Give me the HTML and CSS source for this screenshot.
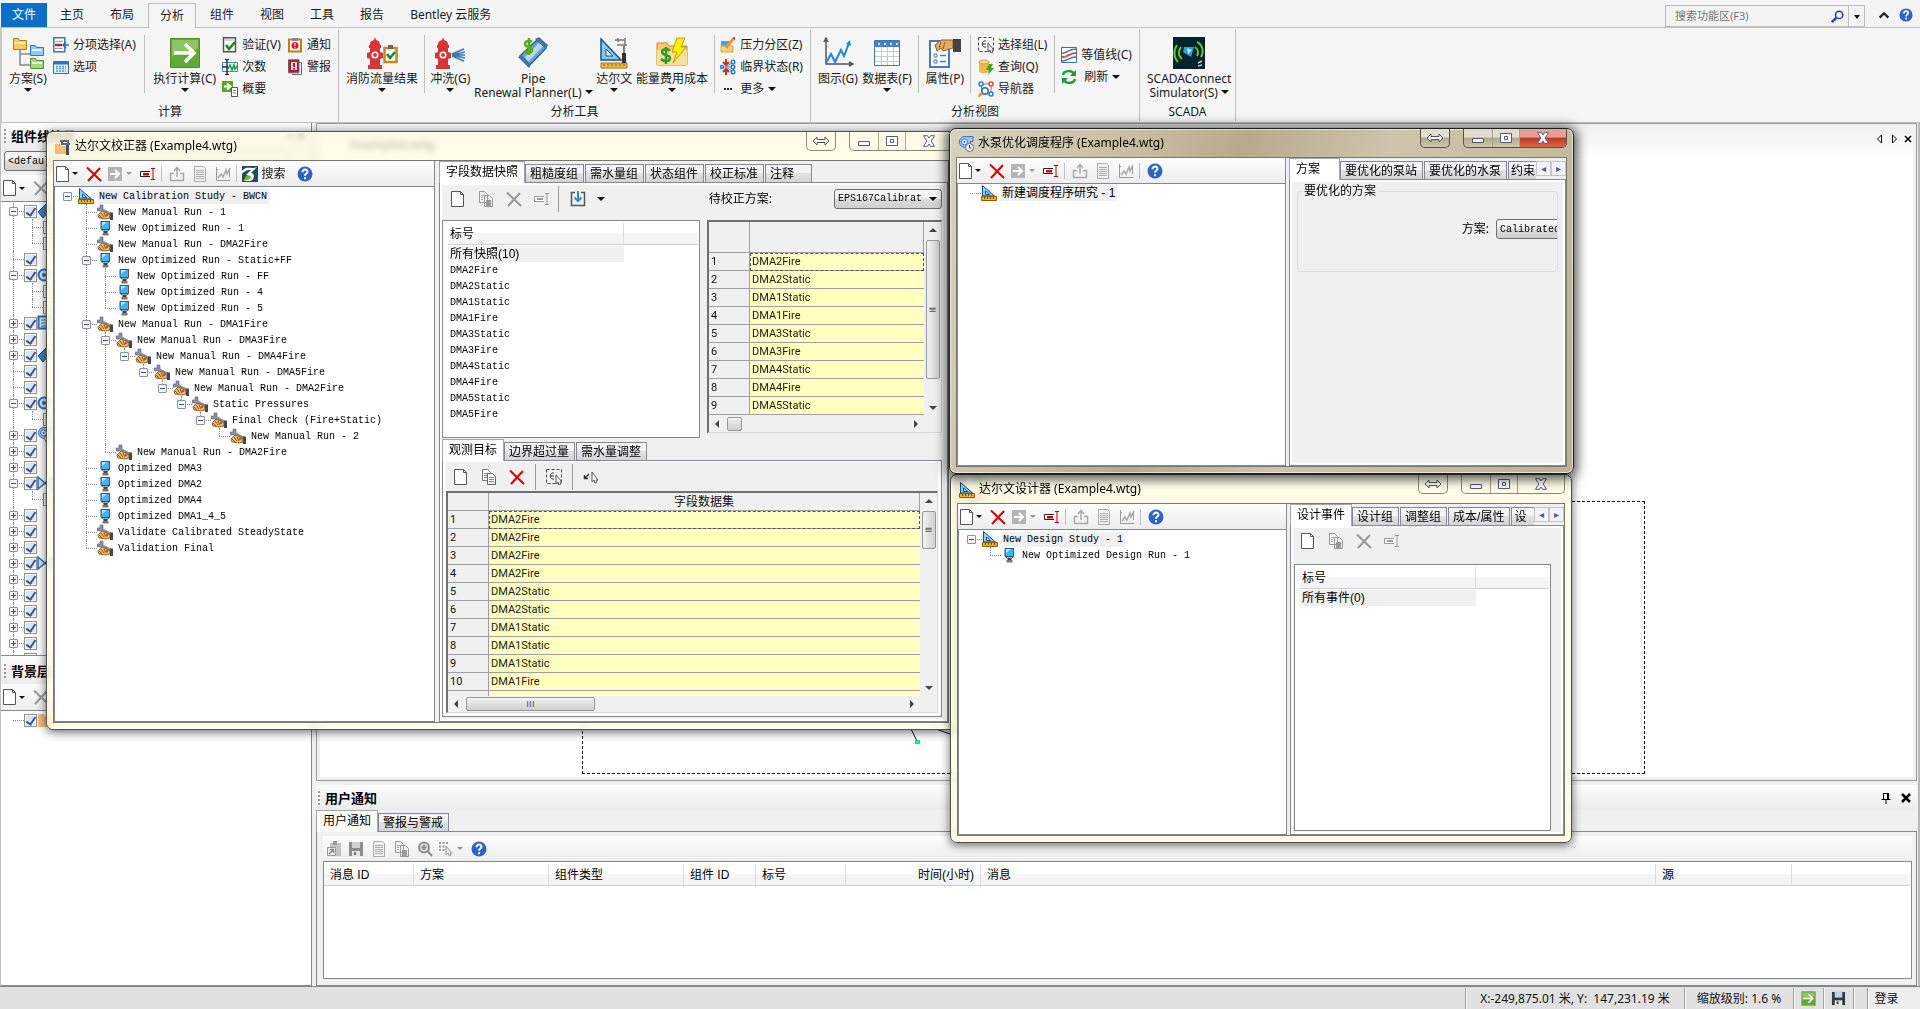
FILE: index.html
```
<!DOCTYPE html>
<html lang="zh-CN">
	<head>
		<meta charset="UTF-8">
		<title>WaterGEMS</title>
		<link rel="stylesheet" href="styles.css">
	</head>
	<body>
		<!-- 图标 -->
		<svg class="sprite" aria-hidden="true">
			<symbol id="new" viewBox="0 0 16 16"><path d="M1.5.5h9l3 3v12h-12z" fill="#fff" stroke="#555"/><path d="M10.500.5v3h3" fill="none" stroke="#555"/></symbol>
			<symbol id="del" viewBox="0 0 16 16"><path d="M1 1.500L15 15M14 2L2 15" fill="none" stroke="#d40000" stroke-width="2"/></symbol>
			<symbol id="del-g" viewBox="0 0 16 16"><path d="M1 1.500L15 15M14 2L2 15" fill="none" stroke="#999" stroke-width="2"/></symbol>
			<symbol id="go-g" viewBox="0 0 16 16"><path d="M1 1h14v14H1z" fill="#b4b4b4"/><path d="M3 8h9M8 4l4 4-4 4" fill="none" stroke="#fff" stroke-width="2"/></symbol>
			<symbol id="go" viewBox="0 0 32 32"><path d="M1.500 1.500h29v29h-29z" fill="#62ab33" stroke="#4d8c26"/><path d="M3 3h26v8C20 18 9 12 3 20z" fill="#8cc466"/><path d="M5 16h19M16 7l9 9-9 9" fill="none" stroke="#fff" stroke-width="3.500"/></symbol>
			<symbol id="ren" viewBox="0 0 16 16"><path d="M10 5.500H.5v5H10" fill="#fff" stroke="#222"/><path d="M3 7h6v2.500H3z" fill="#d40000"/><path d="M11 2.500h4M11 13.500h4M13 3v10" stroke="#b00" fill="none"/></symbol>
			<symbol id="ren-g" viewBox="0 0 16 16"><path d="M10 5.500H.5v5H10" fill="#fff" stroke="#999"/><path d="M3 7h6v2H3z" fill="#999"/><path d="M11 2.500h4M11 13.500h4M13 3v10" stroke="#999" fill="none"/></symbol>
			<symbol id="exp" viewBox="0 0 16 16"><path d="M5 7.500H1.500v7h13v-7H11M8 11V2M5 5l3-3.500L11 5" fill="none" stroke="#aaa" stroke-width="1.500"/></symbol>
			<symbol id="rep" viewBox="0 0 16 16"><path d="M2.500.5h9l2 2v13h-11z" fill="#f2f2f2" stroke="#aaa"/><path d="M4 4.500h8M4 6.500h8M4 8.500h8M4 10.500h8M4 12.500h8" stroke="#aaa"/></symbol>
			<symbol id="cht" viewBox="0 0 16 16"><path d="M1.500 1v13.500H15M1 3.500h2M14.500 2v9" fill="none" stroke="#999"/><path d="M3 12l3-4 2 3 3-7 1 4 3-6" fill="none" stroke="#a8a8a8" stroke-width="1.500"/></symbol>
			<symbol id="help" viewBox="0 0 16 16"><circle cx="8" cy="8" r="7.500" fill="#2a64c8"/><path d="M5.500 6.200C5.500 2.500 10.800 3 10.500 6c-.2 1.700-2.500 1.500-2.500 3.700" fill="none" stroke="#fff" stroke-width="2"/><path d="M7 11.200h2v2H7z" fill="#fff"/></symbol>
			<symbol id="logo" viewBox="0 0 16 16"><path d="M0 0h16v16H0z" fill="#1c4f57"/><path d="M0 5C5-1 9 4 15 1L9 7c4 0 4 7-1 8H1C8 13 8 9 4 9l5-5C6 4 3 4 0 8z" fill="#fff"/><path d="M3 12c1-3 6-3 6-1s-4 4-7 3z" fill="#6abf2b"/></symbol>
			<symbol id="copy" viewBox="0 0 16 16"><path d="M1.500.5h5l3 3v8h-8z" fill="#fff" stroke="#777"/><path d="M3 4.500h4M3 6.500h4M3 8.500h3" stroke="#5a8fd0"/><path d="M6.500 4.500h5l3 3v8h-8z" fill="#fff" stroke="#666"/><path d="M8 8.500h5M8 10.500h5M8 12.500h5" stroke="#5a8fd0"/></symbol>
			<symbol id="copy-g" viewBox="0 0 16 16"><path d="M1.500.5h5l3 3v8h-8zM6.500 4.500h5l3 3v8h-8z" fill="#f4f4f4" stroke="#999"/><path d="M3 4.500h3M3 6.500h2M3 8.500h2" stroke="#aaa"/><path d="M8 9h5v6H8z" fill="#999"/></symbol>
			<symbol id="imp" viewBox="0 0 16 16"><path d="M5 1.500H1.500v13h13v-13H11" fill="none" stroke="#555" stroke-width="1.500"/><path d="M8 0v10M4.500 6.500L8 10l3.500-3.500" fill="none" stroke="#2a8fd6" stroke-width="2"/></symbol>
			<symbol id="sel" viewBox="0 0 16 16"><path d="M.5.5h15v14H.5z" fill="none" stroke="#444" stroke-dasharray="3 2"/><path d="M8 4C3 3 3 11 8 10M4 7h4" fill="none" stroke="#333"/><path d="M10 6v9l2-2 1 3 2-1-1-2h2z" fill="#fff" stroke="#555"/></symbol>
			<symbol id="pick" viewBox="0 0 16 16"><path d="M6 5L2 9M1.500 6v3.500H5" fill="none" stroke="#333" stroke-width="1.500"/><path d="M9 3v10l2-2 1 3 2-1-1-2h2z" fill="#fff" stroke="#555"/></symbol>
			<symbol id="rule" viewBox="0 0 16 16"><path d="M1.500.5L13.500 11h-12z" fill="#8cd0f2" stroke="#0e4e80"/><path d="M4.500 6l4 3.500h-4z" fill="#fff" stroke="#0e4e80"/><path d="M.5 11.500h15v4H.5z" fill="#f0b429" stroke="#8a5a00"/><path d="M3.500 12v2M6.500 12v2M9.500 12v2M12.500 12v2" stroke="#6b4400"/></symbol>
			<symbol id="pc" viewBox="0 0 16 16"><path d="M4 1.500h8.500v8H4z" fill="#3db4f5" stroke="#27557f"/><path d="M5 2h5L5 6z" fill="#b8e6ff"/><path d="M12.500 1v9l-2 1h-4l-2-1" fill="none" stroke="#555"/><path d="M6.500 11h4v2h-4z" fill="#444"/><path d="M5.500 13h6v2.500h-6z" fill="#777"/></symbol>
			<symbol id="hand" viewBox="0 0 16 16"><path d="M0 4h3V1h3v4l8 4-2 3-8-5H0z" fill="#8b8fae" stroke="#5d6280" stroke-width=".6"/><path d="M1 11l4-4 5 2 3 2v3l-4 1-7-1z" fill="#eebb62" stroke="#7a4a12" stroke-width=".8"/><path d="M4 9l3 4M7 9l2 4M2 11l3 3" stroke="#8a5418"/><circle cx="10" cy="11" r="1.200" fill="#e0481e"/><path d="M13 8.500h3V16h-3z" fill="#484848"/></symbol>
			<symbol id="cal" viewBox="0 0 16 16"><path d="M0 5h5l1 2h7v8H0z" fill="#f0bd76"/><path d="M5 2h9M7 5h8M7 1v5M13 1v5" stroke="#5e6a70" stroke-width="2"/><path d="M11 6h3v10h-3z" fill="#44525a"/></symbol>
			<symbol id="pump" viewBox="0 0 16 16"><path d="M15 .5v5h-3C14 10 9 13 5 11 0 9 0 2 6 .5z" fill="#9cc4ee" stroke="#3f78b8"/><circle cx="6.500" cy="6" r="3" fill="#e8f3ff" stroke="#3f78b8"/><circle cx="6.500" cy="6" r="1" fill="#235a9a"/><circle cx="11.500" cy="11.500" r="4" fill="#fff" stroke="#4a6f99"/><path d="M11.500 9v3h2" fill="none" stroke="#333"/></symbol>
			<symbol id="pipe" viewBox="0 0 16 16"><path d="M1 9L9 1l5 5-8 9z" fill="#3f7fc0" stroke="#1c4f8c"/></symbol>
			<symbol id="node" viewBox="0 0 16 16"><circle cx="7" cy="8" r="5.500" fill="#cfe4fa" stroke="#2a6cb4" stroke-width="2"/><circle cx="7" cy="8" r="2" fill="#2a6cb4"/></symbol>
			<symbol id="tank" viewBox="0 0 16 16"><path d="M1.500 1.500h12v12h-12z" fill="#d6e9fb" stroke="#2a6cb4" stroke-width="2"/><path d="M4 5h7M4 8h7M4 11h7" stroke="#2a6cb4"/></symbol>
			<symbol id="valve" viewBox="0 0 16 16"><path d="M1 2l7 6-7 6zM15 2L8 8l7 6z" fill="#cfe4fa" stroke="#2a6cb4" stroke-width="1.500"/></symbol>
			<symbol id="layer" viewBox="0 0 16 16"><path d="M1 2h6l1 2h8v11H1z" fill="#f9b877"/></symbol>
			<symbol id="mag" viewBox="0 0 16 16"><circle cx="10" cy="6" r="4.500" fill="none" stroke="#2c3ea8" stroke-width="2"/><path d="M7 9l-6 6" stroke="#2c3ea8" stroke-width="3"/></symbol>
			<symbol id="wide" viewBox="0 0 18 10"><path d="M1 5l4-4v2.500h8V1l4 4-4 4V6.500H5V9z" fill="#fff" stroke="#555"/></symbol>
			<symbol id="wmin" viewBox="0 0 14 12"><path d="M1.500 6.500h11v4h-11z" fill="#fff" stroke="#555b70"/></symbol>
			<symbol id="wmax" viewBox="0 0 14 12"><path d="M1.500 1.500h11v9h-11z" fill="#fff" stroke="#555b70"/><path d="M5.500 4.500h3v3h-3z" fill="#fff" stroke="#555b70"/></symbol>
			<symbol id="wx" viewBox="0 0 14 12"><path d="M1.500.7h4L7 3 8.500.7h4L9.200 6l3.300 5.300h-4L7 9l-1.500 2.300h-4L4.800 6z" fill="#fff" stroke="#555b70"/></symbol>
			<symbol id="disk" viewBox="0 0 16 16"><path d="M1 1h14v14H1z" fill="#333a48"/><path d="M4 1h8v6H4z" fill="#c8d2de"/><path d="M4 10h8v5H4z" fill="#eee"/><path d="M6 11h2v3H6z" fill="#333"/></symbol>
			<symbol id="disk-g" viewBox="0 0 16 16"><path d="M1 1h14v14H1z" fill="#8c8c8c"/><path d="M4 1h8v6H4z" fill="#d0d0d0"/><path d="M4 10h8v5H4z" fill="#e4e4e4"/><path d="M6 11h2v3H6z" fill="#777"/></symbol>
			<symbol id="openlog" viewBox="0 0 16 16"><path d="M4 2h11v13H4z" fill="#c4c4c4"/><path d="M7 0h4v4H7z" fill="#999"/><path d="M1.500 6.500h8v8h-8z" fill="#eee" stroke="#999"/><path d="M3 13l4-4M4 8.500h3.500V12" fill="none" stroke="#888" stroke-width="1.500"/></symbol>
			<symbol id="zoom" viewBox="0 0 16 16"><circle cx="7" cy="6.500" r="5" fill="#ddd" stroke="#8c8c8c" stroke-width="2"/><path d="M4.500 6.500h5M7 4v5M11 10.500l4 4.500" stroke="#8c8c8c" stroke-width="2"/></symbol>
			<symbol id="dots" viewBox="0 0 16 16"><path d="M1 1h2v2H1zM4.500 1h2v2h-2zM8 1h2v2H8zM1 4.500h2v2H1zM4.500 4.500h2v2h-2zM1 8h2v2H1zM4.500 8h2v2h-2z" fill="#999"/><path d="M8 5v9l2-2 1.500 3 1.500-1-1-2h2z" fill="#e8e8e8" stroke="#999"/></symbol>
			<!-- 功能区图标 -->
			<symbol id="r-scn" viewBox="0 0 32 32"><path d="M8 12v16h10M8 17h10" fill="none" stroke="#888" stroke-width="1.500"/><path d="M1.500 1.500h5l1 2h7v9h-13z" fill="#fbc65a" stroke="#b87a14"/><path d="M3 6h10" stroke="#fff0c8" stroke-width="2"/><path d="M18.500 8.500h5l1 2h7v8h-13z" fill="#8ccbf5" stroke="#2b7db8"/><path d="M20 13h10" stroke="#dff2ff" stroke-width="2"/><path d="M18.500 21.500h5l1 2h7v8h-13z" fill="#a8d67c" stroke="#4f9130"/><path d="M20 26h10" stroke="#e4f5d2" stroke-width="2"/></symbol>
			<symbol id="r-alt" viewBox="0 0 16 16"><path d="M.8.8h11v14H.8z" fill="#fff" stroke="#3c77b5" stroke-width="1.500"/><path d="M2 4.500h8M2 11.500h8" stroke="#9ab"/><path d="M2 8h7" stroke="#c81e1e" stroke-width="2.500"/><path d="M16 8h-5M13 5l-3 3 3 3" fill="none" stroke="#2a6cb4" stroke-width="1.500"/></symbol>
			<symbol id="r-opt" viewBox="0 0 16 16"><path d="M.5 2.500h15v12H.5z" fill="#e2f0fd" stroke="#2c72c2"/><path d="M1 3h14v2.500H1z" fill="#2c72c2"/><path d="M3 7.500h10M3 9.500h10M3 12h10" stroke="#5a9be0" stroke-dasharray="2 1" stroke-width="1.500"/></symbol>
			<symbol id="r-val" viewBox="0 0 16 16"><path d="M1.500.8h12v14h-12z" fill="#fff" stroke="#555" stroke-width="1.500"/><path d="M3 3h9" stroke="#aaa"/><path d="M4 8l3 4 6-7" fill="none" stroke="#12851c" stroke-width="2.500"/></symbol>
			<symbol id="r-time" viewBox="0 0 16 16"><path d="M.5 3.500h15v9H.5z" fill="#eaf4fc" stroke="#4d86b5"/><path d="M0 8h6M5 1v14M3 .5h4M3 15.500h4" stroke="#333" stroke-width="1.500"/><path d="M6 10l2-4 2 5 2-5 1 4 3-4" fill="none" stroke="#18a038" stroke-width="1.500"/></symbol>
			<symbol id="r-sum" viewBox="0 0 16 16"><path d="M0 0h11v11H0z" fill="#57a52c"/><path d="M2 5.500h6M5 2.500l3.500 3-3.500 3" fill="none" stroke="#fff" stroke-width="2"/><path d="M9.500 6.500h6v9h-6z" fill="#fff" stroke="#555"/><path d="M11 9.500h3M11 12h3" stroke="#777"/></symbol>
			<symbol id="r-note" viewBox="0 0 16 16"><path d="M2 2.500h12v12H2z" fill="#fff" stroke="#bb8112" stroke-width="2"/><path d="M5 1h6v3H5z" fill="#888"/><circle cx="8" cy="8.500" r="3.500" fill="#d01e2e"/><path d="M8 6v3M8 10v1.500" stroke="#fff"/></symbol>
			<symbol id="r-alarm" viewBox="0 0 16 16"><path d="M5 3.500h9.500v12H5" fill="#fff" stroke="#666"/><path d="M1.500.8H12v13H1.500z" fill="#c1152a" stroke="#666"/><path d="M4 3h6v8H4z" fill="#e8d8d8"/><path d="M6 4h2v4H6zM6 9h2v1.500H6z" fill="#c1152a"/></symbol>
			<symbol id="r-fire" viewBox="0 0 32 32"><path d="M9 0l1 3c4 1 4 3 4 5h1v3h-1v4l3 1v5l-3 1v6h2v4H2v-4h2v-6l-3-1v-5l3-1v-4H3V8h1c0-2 0-4 4-5z" fill="#d83636"/><circle cx="9" cy="18" r="3.500" fill="#fff"/><circle cx="9" cy="18" r="2" fill="#d83636"/><path d="M18.500 11h12v14h-12z" fill="#fff" stroke="#c08c1c" stroke-width="2.500"/><path d="M22 8h5v4h-5z" fill="#666"/><path d="M21 17l3 4 5-6" stroke="#128a24" stroke-width="2.500" fill="none"/></symbol>
			<symbol id="r-flush" viewBox="0 0 32 32"><path d="M9 0l1 3c4 1 4 3 4 5h1v3h-1v4l3 1v5l-3 1v6h2v4H2v-4h2v-6l-3-1v-5l3-1v-4H3V8h1c0-2 0-4 4-5z" fill="#d83636"/><circle cx="9" cy="18" r="3.500" fill="#fff"/><circle cx="9" cy="18" r="2" fill="#d83636"/><path d="M18 17l12-5M18 18h13M18 19l12 5M18 18l13-3M18 18l13 3" stroke="#3578b4" stroke-width="1.500"/></symbol>
			<symbol id="r-ren" viewBox="0 0 32 32"><path d="M3 19L20 3l9 8-17 18z" fill="#6ba2d6" stroke="#2a5c92" stroke-width="1.500"/><path d="M8 20L22 6l4 3-15 16z" fill="#b6d6f2"/><path d="M18 2l4-2 9 8-2 4zM1 20l3-2 10 9-2 4z" fill="#47739f"/><path d="M15 5c-2-2-7-1-7 2 0 4 7 2 7 6 0 3-5 4-8 1M12 1v17" fill="none" stroke="#54ae14" stroke-width="2.500"/></symbol>
			<symbol id="r-dar" viewBox="0 0 32 32"><path d="M3 2l20 21H3z" fill="#8cc8ec" stroke="#12568c" stroke-width="1.500"/><path d="M8 12l7 7H8z" fill="#eef7fd" stroke="#12568c"/><path d="M3 26h26v5H3z" fill="#f3bd4c" stroke="#a86f0c"/><path d="M6 27v2M10 27v2M14 27v2M18 27v2M22 27v2M26 27v2" stroke="#7c4f00"/><path d="M17 3h10M19 8h10M20 1v4M27 1v8" stroke="#777" stroke-width="1.500"/><path d="M25 9h2v7h-2z" fill="#777"/><path d="M24 16h4v10h-4z" fill="#333"/></symbol>
			<symbol id="r-cost" viewBox="0 0 32 32"><path d="M1 6h10l2 3h18v19H1z" fill="#f7cd70" stroke="#c88a1c"/><path d="M1 13h30v15H1z" fill="#fbdf98"/><path d="M14 14c-2-3-8-2-8 1 0 4 8 2 8 6 0 4-6 4-9 1M10 10v17" fill="none" stroke="#319a28" stroke-width="2.500"/><path d="M21 1h8l-4 9h5L17 26l4-11h-5z" fill="#fff200" stroke="#c79a00"/></symbol>
			<symbol id="r-zone" viewBox="0 0 16 16"><path d="M1 4h9v5H1z" fill="#3da2e8"/><path d="M1 9h12v6H1z" fill="#fbd178" stroke="#e2a838"/><path d="M6 11l7-9" stroke="#eb9834" stroke-width="3"/><path d="M12 1l3 2 0-3z" fill="#c02020"/></symbol>
			<symbol id="r-crit" viewBox="0 0 16 16"><path d="M6 0v5M3 3l3 3 3-3M6 16v-5M3 13l3-3 3 3" stroke="#d42a10" stroke-width="2" fill="none"/><path d="M1 8h12M6 8l7-5M6 8l7 5" stroke="#4c90cc"/><g fill="#fff" stroke="#2b7cc4" stroke-width="1.500"><circle cx="2" cy="8" r="1.500"/><circle cx="13" cy="3" r="1.800"/><circle cx="13" cy="8" r="1.800"/><circle cx="13" cy="13" r="1.800"/></g></symbol>
			<symbol id="r-more" viewBox="0 0 16 16"><path d="M4 7h2v2H4zM7 7h2v2H7zM10 7h2v2h-2z" fill="#222"/></symbol>
			<symbol id="r-graph" viewBox="0 0 32 32"><path d="M4 2v25h26M2 5l2-4 2 4M27 25l4 2-4 2" fill="none" stroke="#555" stroke-width="1.500"/><path d="M4 26l5-9 4 8 6-12 3 6 5-13" fill="none" stroke="#1c88d8" stroke-width="2"/><path d="M24 7l4-4 1 6z" fill="#1c88d8"/></symbol>
			<symbol id="r-table" viewBox="0 0 32 32"><path d="M3.500 3.500h25v25h-25z" fill="#fff" stroke="#3d77b4"/><path d="M4 4h24v6H4z" fill="#4683c0"/><path d="M7 6h2v2H7zM13 6h2v2h-2zM19 6h2v2h-2zM25 6h2v2h-2z" fill="#cfe4fa"/><path d="M4 14.500h24M4 19.500h24M4 24.500h24M10.500 10v18M16.500 10v18M22.500 10v18" stroke="#c3c9da"/></symbol>
			<symbol id="r-prop" viewBox="0 0 32 32"><path d="M1 4h19v26H1z" fill="#fff" stroke="#4679bd" stroke-width="2"/><path d="M5 17h3v3H5zM5 23h3v3H5z" fill="none" stroke="#4679bd"/><path d="M11 18.500h6M11 24.500h6" stroke="#4679bd" stroke-width="1.500"/><path d="M6 8l6-5 12 0v8l-10 3-2-3-4 3z" fill="#e2ae64" stroke="#90601e"/><path d="M12 5l-2 6M16 5l-2 7" stroke="#90601e"/><path d="M24 2h8v13h-8z" fill="#444"/></symbol>
			<symbol id="r-query" viewBox="0 0 16 16"><path d="M1 3v9c0 3 10 3 10 0V3z" fill="#f2b44c"/><ellipse cx="6" cy="3" rx="5" ry="2" fill="#fbd990" stroke="#d89a30"/><path d="M11 5h4l-2 4h3l-6 7 1-5H8z" fill="#3aa81c"/></symbol>
			<symbol id="r-nav" viewBox="0 0 16 16"><path d="M4 3h8M13 5v7M3 4l1 6" stroke="#888"/><g fill="#fff" stroke-width="1.500"><circle cx="3" cy="3" r="2" stroke="#1a86c9"/><circle cx="13" cy="3" r="2" stroke="#d65030"/><circle cx="13" cy="13" r="2" stroke="#1a86c9"/><circle cx="7" cy="10" r="3.200" stroke="#3568a8"/></g><path d="M4 12l-4 4" stroke="#eb9b22" stroke-width="2.500"/></symbol>
			<symbol id="r-cont" viewBox="0 0 16 16"><path d="M.5.5h15v15H.5z" fill="#fff" stroke="#486c9c"/><path d="M1 6c5 1 5-4 14-4M1 14c6 0 7-4 14-4" stroke="#3a78c2" stroke-width="1.500" fill="none"/><path d="M1 10c6 1 6-4 14-4" stroke="#e05028" stroke-width="2" fill="none"/></symbol>
			<symbol id="r-ref" viewBox="0 0 16 16"><path d="M2 6c1-5 9-5 11-1M14 10c-1 5-9 5-11 1" fill="none" stroke="#1e9c3c" stroke-width="2.500"/><path d="M15 1v6H9zM1 15V9h6z" fill="#1e9c3c"/></symbol>
			<symbol id="r-scada" viewBox="0 0 32 32"><path d="M0 0h32v32H0z" fill="#04242b"/><path d="M11 10h10l-3 10-8-5z" fill="#2f9fe2"/><path d="M14 11l5 2-4 4z" fill="#bdeaff"/><path d="M8 10c-3 4-3 9 1 12M4 8c-4 6-3 13 1 17M22 10c3 2 4 6 2 9M24 5c6 3 7 10 4 15" fill="none" stroke="#67c23a" stroke-width="2"/><path d="M25 26l4-2M25 29l4-1" stroke="#ccc" stroke-width="1.500"/></symbol>
		</svg>

		<div class="app">
			<nav class="menu">
				<button class="file">文件</button>
				<button>主页</button>
				<button>布局</button>
				<button class="on">分析</button>
				<button>组件</button>
				<button>视图</button>
				<button>工具</button>
				<button>报告</button>
				<button>Bentley 云服务</button>
				<div class="find">
					<input type="text" placeholder="搜索功能区(F3)" aria-label="搜索功能区">
					<button aria-label="搜索"><svg><use href="#mag"/></svg></button>
					<button class="drop" aria-label="更多"><i class="caret"></i></button>
				</div>
				<button class="mini" aria-label="折叠"><svg viewBox="0 0 16 16"><path d="M3 11l5-5 5 5" fill="none" stroke="#222" stroke-width="2.500"/></svg></button>
				<button class="mini" aria-label="帮助"><svg><use href="#help"/></svg></button>
			</nav>

			<div class="ribbon">
				<section class="group g1">
					<div class="tools">
						<button class="big"><svg><use href="#r-scn"/></svg>方案(S)<i class="caret"></i></button>
						<div class="col">
							<button><svg><use href="#r-alt"/></svg>分项选择(A)</button>
							<button><svg><use href="#r-opt"/></svg>选项</button>
						</div>
						<hr>
						<button class="big"><svg><use href="#go"/></svg>执行计算(C)<i class="caret"></i></button>
						<div class="col">
							<button><svg><use href="#r-val"/></svg>验证(V)</button>
							<button><svg><use href="#r-time"/></svg>次数</button>
							<button><svg><use href="#r-sum"/></svg>概要</button>
						</div>
						<div class="col">
							<button><svg><use href="#r-note"/></svg>通知</button>
							<button><svg><use href="#r-alarm"/></svg>警报</button>
						</div>
					</div>
					<h2>计算</h2>
				</section>
				<section class="group g2">
					<div class="tools">
						<button class="big"><svg><use href="#r-fire"/></svg>消防流量结果<i class="caret"></i></button>
						<hr>
						<button class="big"><svg><use href="#r-flush"/></svg>冲洗(G)<i class="caret"></i></button>
						<button class="big"><svg><use href="#r-ren"/></svg>Pipe<span>Renewal Planner(L)<i class="caret"></i></span></button>
						<button class="big"><svg><use href="#r-dar"/></svg>达尔文<i class="caret"></i></button>
						<button class="big"><svg><use href="#r-cost"/></svg>能量费用成本<i class="caret"></i></button>
						<hr>
						<div class="col">
							<button><svg><use href="#r-zone"/></svg>压力分区(Z)</button>
							<button><svg><use href="#r-crit"/></svg>临界状态(R)</button>
							<button><svg><use href="#r-more"/></svg>更多<i class="caret"></i></button>
						</div>
					</div>
					<h2>分析工具</h2>
				</section>
				<section class="group g3">
					<div class="tools">
						<button class="big"><svg><use href="#r-graph"/></svg>图示(G)</button>
						<button class="big"><svg><use href="#r-table"/></svg>数据表(F)<i class="caret"></i></button>
						<hr>
						<button class="big"><svg><use href="#r-prop"/></svg>属性(P)</button>
						<hr>
						<div class="col">
							<button><svg><use href="#sel"/></svg>选择组(L)</button>
							<button><svg><use href="#r-query"/></svg>查询(Q)</button>
							<button><svg><use href="#r-nav"/></svg>导航器</button>
						</div>
						<hr>
						<div class="col mid">
							<button><svg><use href="#r-cont"/></svg>等值线(C)</button>
							<button><svg><use href="#r-ref"/></svg>&nbsp;刷新 <i class="caret"></i></button>
						</div>
					</div>
					<h2>分析视图</h2>
				</section>
				<section class="group g4">
					<div class="tools">
						<button class="big"><svg><use href="#r-scada"/></svg>SCADAConnect<span>Simulator(S)<i class="caret"></i></span></button>
					</div>
					<h2>SCADA</h2>
				</section>
			</div>

			<main class="work">
				<aside class="side">
					<header class="dock"><b>组件线符号</b><span>▾ ✖</span></header>
					<div class="pick"><select aria-label="符号定义"><option>&lt;default&gt;</option></select></div>
					<div class="bar">
						<button class="dd" aria-label="新建"><svg><use href="#new"/></svg><i class="caret"></i></button>
						<button aria-label="删除"><svg><use href="#del-g"/></svg></button>
					</div>
					<ul class="tree symbols">
						<li><div class="node"><i class="box minus"></i><input type="checkbox" checked aria-label="管道"><svg><use href="#pipe"/></svg></div>
							<ul><li><div class="node"><input type="checkbox" aria-label="标签"></div></li><li><div class="node"><input type="checkbox" aria-label="颜色"></div></li></ul></li>
						<li><div class="node"><input type="checkbox" checked aria-label="侧管"></div></li>
						<li><div class="node"><i class="box minus"></i><input type="checkbox" checked aria-label="节点"><svg><use href="#node"/></svg></div>
							<ul><li><div class="node"><input type="checkbox" aria-label="标签"></div></li><li><div class="node"><input type="checkbox" aria-label="颜色"></div></li></ul></li>
						<li><div class="node"><i class="box plus"></i><input type="checkbox" checked aria-label="水池"><svg><use href="#tank"/></svg></div></li>
						<li><div class="node"><i class="box plus"></i><input type="checkbox" checked aria-label="水塔"></div></li>
						<li><div class="node"><i class="box plus"></i><input type="checkbox" checked aria-label="消火栓"><svg><use href="#pipe"/></svg></div></li>
						<li><div class="node"><input type="checkbox" checked aria-label="龙头"></div></li>
						<li><div class="node"><input type="checkbox" checked aria-label="用户"></div></li>
						<li><div class="node"><i class="box minus"></i><input type="checkbox" checked aria-label="水库"><svg><use href="#node"/></svg></div>
							<ul><li><div class="node"><input type="checkbox" aria-label="标签"></div></li></ul></li>
						<li><div class="node"><i class="box plus"></i><input type="checkbox" checked aria-label="水泵"><svg><use href="#pump"/></svg></div></li>
						<li><div class="node"><i class="box plus"></i><input type="checkbox" checked aria-label="泵站"></div></li>
						<li><div class="node"><i class="box plus"></i><input type="checkbox" checked aria-label="变速泵组"></div></li>
						<li><div class="node"><i class="box minus"></i><input type="checkbox" checked aria-label="减压阀"><svg><use href="#valve"/></svg></div>
							<ul><li><div class="node"><input type="checkbox" aria-label="标签"></div></li></ul></li>
						<li><div class="node"><i class="box plus"></i><input type="checkbox" checked aria-label="稳压阀"></div></li>
						<li><div class="node"><i class="box plus"></i><input type="checkbox" checked aria-label="断压阀"></div></li>
						<li><div class="node"><i class="box plus"></i><input type="checkbox" checked aria-label="流量控制阀"></div></li>
						<li><div class="node"><i class="box plus"></i><input type="checkbox" checked aria-label="节流阀"><svg><use href="#valve"/></svg></div></li>
						<li><div class="node"><i class="box plus"></i><input type="checkbox" checked aria-label="通用阀"></div></li>
						<li><div class="node"><i class="box plus"></i><input type="checkbox" checked aria-label="隔离阀"></div></li>
						<li><div class="node"><i class="box plus"></i><input type="checkbox" checked aria-label="孔板"></div></li>
						<li><div class="node"><i class="box plus"></i><input type="checkbox" checked aria-label="涡轮"></div></li>
						<li><div class="node"><i class="box plus"></i><input type="checkbox" checked aria-label="止回阀"></div></li>
						<li><div class="node"><input type="checkbox" checked aria-label="气阀"></div></li>
					</ul>
					<header class="dock low"><b>背景层</b></header>
					<div class="bar">
						<button class="dd" aria-label="新建"><svg><use href="#new"/></svg><i class="caret"></i></button>
						<button aria-label="删除"><svg><use href="#del-g"/></svg></button>
					</div>
					<ul class="tree layers">
						<li><div class="node"><input type="checkbox" checked aria-label="背景层"><svg><use href="#layer"/></svg></div></li>
					</ul>
				</aside>

				<div class="center">
					<section class="drawing">
						<header class="doc"><b>Example4.wtg</b><span>
							<button aria-label="上一个"><svg viewBox="0 0 10 10"><path d="M6.500 1v8L2.500 5z" fill="#fff" stroke="#000"/></svg></button>
							<button aria-label="下一个"><svg viewBox="0 0 10 10"><path d="M3.500 1v8l4-4z" fill="#fff" stroke="#000"/></svg></button>
							<button aria-label="关闭"><svg viewBox="0 0 10 10"><path d="M2 2l6 6M8 2L2 8" stroke="#000" stroke-width="1.500"/></svg></button>
						</span></header>
						<div class="canvas">
							<div class="extent"></div>
							<svg class="net" viewBox="0 0 140 280" aria-hidden="true"><path d="M5 258l6 12M30 258l14 5 12-8M60 20l30 14 20-20" fill="none" stroke="#111"/><path d="M50 12l18 20 14-16M60 60v-30" stroke="#c03050" fill="none" stroke-width="3"/><path d="M9 269h5v4H9zM28 255h5v4h-5zM70 4h6v6h-6z" fill="#00f080"/></svg>
						</div>
					</section>
					<section class="notify">
						<header class="dock"><b>用户通知</b><span><svg viewBox="0 0 12 12"><path d="M3 1.500h6M3.500 1v6M1.500 7.500h9M6 8v4M7.500 1v6M8.500 1v6" stroke="#000" fill="none"/></svg><svg viewBox="0 0 12 12"><path d="M2 2l8 8M10 2l-8 8" stroke="#000" stroke-width="2.500"/></svg></span></header>
						<div class="tabs"><button class="on">用户通知</button><button>警报与警戒</button></div>
						<div class="page">
							<div class="bar">
								<button aria-label="打开"><svg><use href="#openlog"/></svg></button>
								<button aria-label="保存"><svg><use href="#disk-g"/></svg></button>
								<button aria-label="报告"><svg><use href="#rep"/></svg></button>
								<button aria-label="复制"><svg><use href="#copy-g"/></svg></button>
								<button aria-label="缩放"><svg><use href="#zoom"/></svg></button>
								<button class="dd off" aria-label="选择"><svg><use href="#dots"/></svg><i class="caret"></i></button>
								<button aria-label="帮助"><svg><use href="#help"/></svg></button>
							</div>
							<div class="list">
								<table>
									<colgroup><col class="c90"><col class="c135"><col class="c135"><col class="c72"><col class="c90"><col class="c135"><col><col class="c136"><col class="c120"></colgroup>
									<thead><tr><th>消息 ID</th><th>方案</th><th>组件类型</th><th>组件 ID</th><th>标号</th><th class="num">时间(小时)</th><th>消息</th><th>源</th><th></th></tr></thead>
								</table>
							</div>
						</div>
					</section>
				</div>
			</main>

			<footer class="status">
				<span class="xy">X:-249,875.01 米, Y:&nbsp; 147,231.19 米</span>
				<span class="lvl">缩放级别: 1.6 %</span>
				<span class="ico"><svg><use href="#go"/></svg></span>
				<span class="ico"><svg><use href="#disk"/></svg></span>
				<span class="gap"></span>
				<button>登录</button>
			</footer>
		</div>

		<!-- 达尔文校正器 -->
		<section class="window w1">
			<header class="title">
				<svg><use href="#cal"/></svg><h1>达尔文校正器 (Example4.wtg)</h1>
				<div class="ctl one"><button aria-label="移动"><svg class="wide"><use href="#wide"/></svg></button></div>
				<div class="ctl"><button aria-label="最小化"><svg><use href="#wmin"/></svg></button><button aria-label="最大化"><svg><use href="#wmax"/></svg></button><button class="x" aria-label="关闭"><svg><use href="#wx"/></svg></button></div>
			</header>
			<div class="body">
				<div class="left">
					<div class="bar">
						<button class="dd" aria-label="新建"><svg><use href="#new"/></svg><i class="caret"></i></button>
						<button aria-label="删除"><svg><use href="#del"/></svg></button>
						<button class="dd off" aria-label="计算"><svg><use href="#go-g"/></svg><i class="caret"></i></button>
						<button aria-label="重命名"><svg><use href="#ren"/></svg></button><hr>
						<button aria-label="导出"><svg><use href="#exp"/></svg></button>
						<button aria-label="报告"><svg><use href="#rep"/></svg></button>
						<button aria-label="图表"><svg><use href="#cht"/></svg></button><hr>
						<button class="txt"><svg><use href="#logo"/></svg>搜索</button>
						<button aria-label="帮助"><svg><use href="#help"/></svg></button>
					</div>
					<ul class="tree">
						<li><div class="node"><i class="box minus"></i><svg><use href="#rule"/></svg><span class="sel">New Calibration Study - BWCN</span></div>
							<ul>
								<li><div class="node"><svg><use href="#hand"/></svg><span>New Manual Run - 1</span></div></li>
								<li><div class="node"><svg><use href="#pc"/></svg><span>New Optimized Run - 1</span></div></li>
								<li><div class="node"><svg><use href="#hand"/></svg><span>New Manual Run - DMA2Fire</span></div></li>
								<li><div class="node"><i class="box minus"></i><svg><use href="#pc"/></svg><span>New Optimized Run - Static+FF</span></div>
									<ul>
										<li><div class="node"><svg><use href="#pc"/></svg><span>New Optimized Run - FF</span></div></li>
										<li><div class="node"><svg><use href="#pc"/></svg><span>New Optimized Run - 4</span></div></li>
										<li><div class="node"><svg><use href="#pc"/></svg><span>New Optimized Run - 5</span></div></li>
									</ul>
								</li>
								<li><div class="node"><i class="box minus"></i><svg><use href="#hand"/></svg><span>New Manual Run - DMA1Fire</span></div>
									<ul>
										<li><div class="node"><i class="box minus"></i><svg><use href="#hand"/></svg><span>New Manual Run - DMA3Fire</span></div>
											<ul><li><div class="node"><i class="box minus"></i><svg><use href="#hand"/></svg><span>New Manual Run - DMA4Fire</span></div>
												<ul><li><div class="node"><i class="box minus"></i><svg><use href="#hand"/></svg><span>New Manual Run - DMA5Fire</span></div>
													<ul><li><div class="node"><i class="box minus"></i><svg><use href="#hand"/></svg><span>New Manual Run - DMA2Fire</span></div>
														<ul><li><div class="node"><i class="box minus"></i><svg><use href="#hand"/></svg><span>Static Pressures</span></div>
															<ul><li><div class="node"><i class="box minus"></i><svg><use href="#hand"/></svg><span>Final Check (Fire+Static)</span></div>
																<ul><li><div class="node"><svg><use href="#hand"/></svg><span>New Manual Run - 2</span></div></li></ul>
															</li></ul>
														</li></ul>
													</li></ul>
												</li></ul>
											</li></ul>
										</li>
										<li><div class="node"><svg><use href="#hand"/></svg><span>New Manual Run - DMA2Fire</span></div></li>
									</ul>
								</li>
								<li><div class="node"><svg><use href="#pc"/></svg><span>Optimized DMA3</span></div></li>
								<li><div class="node"><svg><use href="#pc"/></svg><span>Optimized DMA2</span></div></li>
								<li><div class="node"><svg><use href="#pc"/></svg><span>Optimized DMA4</span></div></li>
								<li><div class="node"><svg><use href="#pc"/></svg><span>Optimized DMA1_4_5</span></div></li>
								<li><div class="node"><svg><use href="#hand"/></svg><span>Validate Calibrated SteadyState</span></div></li>
								<li><div class="node"><svg><use href="#hand"/></svg><span>Validation Final</span></div></li>
							</ul>
						</li>
					</ul>
				</div>
				<div class="right">
					<div class="tabs"><button class="on">字段数据快照</button><button>粗糙度组</button><button>需水量组</button><button>状态组件</button><button>校正标准</button><button>注释&emsp;</button></div>
					<div class="page">
						<div class="bar flat">
							<button aria-label="新建"><svg><use href="#new"/></svg></button>
							<button aria-label="复制"><svg><use href="#copy-g"/></svg></button>
							<button aria-label="删除"><svg><use href="#del-g"/></svg></button>
							<button aria-label="重命名"><svg><use href="#ren-g"/></svg></button><hr>
							<button class="dd" aria-label="导入"><svg><use href="#imp"/></svg><i class="caret"></i></button>
							<label for="rep-scn">待校正方案:</label>
							<span class="combo"><select id="rep-scn"><option>EPS167Calibrat</option></select></span>
						</div>
						<div class="upper">
							<div class="list">
								<table>
									<colgroup><col class="lab"><col></colgroup>
									<thead><tr><th>标号</th><th></th></tr></thead>
									<tbody>
										<tr class="cn"><td>所有快照(10)</td></tr>
										<tr><td>DMA2Fire</td></tr>
										<tr><td>DMA2Static</td></tr>
										<tr><td>DMA1Static</td></tr>
										<tr><td>DMA1Fire</td></tr>
										<tr><td>DMA3Static</td></tr>
										<tr><td>DMA3Fire</td></tr>
										<tr><td>DMA4Static</td></tr>
										<tr><td>DMA4Fire</td></tr>
										<tr><td>DMA5Static</td></tr>
										<tr><td>DMA5Fire</td></tr>
									</tbody>
								</table>
							</div>
							<div class="grid tall">
								<div class="cells"><table>
									<thead><tr><th></th><th></th></tr></thead>
									<tbody>
										<tr><th>1</th><td>DMA2Fire</td></tr>
										<tr><th>2</th><td>DMA2Static</td></tr>
										<tr><th>3</th><td>DMA1Static</td></tr>
										<tr><th>4</th><td>DMA1Fire</td></tr>
										<tr><th>5</th><td>DMA3Static</td></tr>
										<tr><th>6</th><td>DMA3Fire</td></tr>
										<tr><th>7</th><td>DMA4Static</td></tr>
										<tr><th>8</th><td>DMA4Fire</td></tr>
										<tr><th>9</th><td>DMA5Static</td></tr>
									</tbody>
								</table></div>
								<div class="sb v"><i class="arr up"></i><i class="thumb"><b>≡</b></i><i class="arr down"></i></div>
								<div class="sb h"><i class="arr lt"></i><i class="thumb"></i><i class="arr rt"></i></div>
							</div>
						</div>
						<div class="tabs"><button class="on">观测目标</button><button>边界超过量</button><button>需水量调整</button></div>
						<div class="lower">
							<div class="bar flat">
								<button aria-label="新建"><svg><use href="#new"/></svg></button>
								<button aria-label="复制"><svg><use href="#copy"/></svg></button>
								<button aria-label="删除"><svg><use href="#del"/></svg></button><hr>
								<button aria-label="选择"><svg><use href="#sel"/></svg></button><hr>
								<button aria-label="拾取"><svg><use href="#pick"/></svg></button>
							</div>
							<div class="grid">
								<div class="cells"><table>
									<thead><tr><th></th><th>字段数据集</th></tr></thead>
									<tbody>
										<tr><th>1</th><td>DMA2Fire</td></tr>
										<tr><th>2</th><td>DMA2Fire</td></tr>
										<tr><th>3</th><td>DMA2Fire</td></tr>
										<tr><th>4</th><td>DMA2Fire</td></tr>
										<tr><th>5</th><td>DMA2Static</td></tr>
										<tr><th>6</th><td>DMA2Static</td></tr>
										<tr><th>7</th><td>DMA1Static</td></tr>
										<tr><th>8</th><td>DMA1Static</td></tr>
										<tr><th>9</th><td>DMA1Static</td></tr>
										<tr><th>10</th><td>DMA1Fire</td></tr>
										<tr><th></th><td></td></tr>
									</tbody>
								</table></div>
								<div class="sb v"><i class="arr up"></i><i class="thumb"><b>≡</b></i><i class="arr down"></i></div>
								<div class="sb h"><i class="arr lt"></i><i class="thumb"><b>ııı</b></i><i class="arr rt"></i></div>
							</div>
						</div>
					</div>
				</div>
			</div>
		</section>

		<!-- 达尔文设计器 -->
		<section class="window w3">
			<header class="title">
				<svg><use href="#rule"/></svg><h1>达尔文设计器 (Example4.wtg)</h1>
				<div class="ctl one"><button aria-label="移动"><svg class="wide"><use href="#wide"/></svg></button></div>
				<div class="ctl"><button aria-label="最小化"><svg><use href="#wmin"/></svg></button><button aria-label="最大化"><svg><use href="#wmax"/></svg></button><button class="x" aria-label="关闭"><svg><use href="#wx"/></svg></button></div>
			</header>
			<div class="body">
				<div class="left">
					<div class="bar">
						<button class="dd" aria-label="新建"><svg><use href="#new"/></svg><i class="caret"></i></button>
						<button aria-label="删除"><svg><use href="#del"/></svg></button>
						<button class="dd off" aria-label="计算"><svg><use href="#go-g"/></svg><i class="caret"></i></button>
						<button aria-label="重命名"><svg><use href="#ren"/></svg></button><hr>
						<button aria-label="导出"><svg><use href="#exp"/></svg></button>
						<button aria-label="报告"><svg><use href="#rep"/></svg></button>
						<button aria-label="图表"><svg><use href="#cht"/></svg></button><hr>
						<button aria-label="帮助"><svg><use href="#help"/></svg></button>
					</div>
					<ul class="tree">
						<li><div class="node"><i class="box minus"></i><svg><use href="#rule"/></svg><span class="sel">New Design Study - 1</span></div>
							<ul><li><div class="node"><svg><use href="#pc"/></svg><span>New Optimized Design Run - 1</span></div></li></ul>
						</li>
					</ul>
				</div>
				<div class="right">
					<div class="tabs"><button class="on">设计事件</button><button>设计组</button><button>调整组</button><button>成本/属性</button><button class="cut">设</button><div class="spin"><button aria-label="左">◂</button><button aria-label="右">▸</button></div></div>
					<div class="page">
						<div class="bar flat">
							<button aria-label="新建"><svg><use href="#new"/></svg></button>
							<button aria-label="复制"><svg><use href="#copy-g"/></svg></button>
							<button aria-label="删除"><svg><use href="#del-g"/></svg></button>
							<button aria-label="重命名"><svg><use href="#ren-g"/></svg></button>
						</div>
						<div class="list">
							<table>
								<colgroup><col class="lab"><col></colgroup>
								<thead><tr><th>标号</th><th></th></tr></thead>
								<tbody><tr class="cn"><td>所有事件(0)</td></tr></tbody>
							</table>
						</div>
					</div>
				</div>
			</div>
		</section>

		<!-- 水泵优化调度程序 -->
		<section class="window w2 active">
			<header class="title">
				<svg><use href="#pump"/></svg><h1>水泵优化调度程序 (Example4.wtg)</h1>
				<div class="ctl one"><button aria-label="移动"><svg class="wide"><use href="#wide"/></svg></button></div>
				<div class="ctl"><button aria-label="最小化"><svg><use href="#wmin"/></svg></button><button aria-label="最大化"><svg><use href="#wmax"/></svg></button><button class="x" aria-label="关闭"><svg><use href="#wx"/></svg></button></div>
			</header>
			<div class="body">
				<div class="left">
					<div class="bar">
						<button class="dd" aria-label="新建"><svg><use href="#new"/></svg><i class="caret"></i></button>
						<button aria-label="删除"><svg><use href="#del"/></svg></button>
						<button class="dd off" aria-label="计算"><svg><use href="#go-g"/></svg><i class="caret"></i></button>
						<button aria-label="重命名"><svg><use href="#ren"/></svg></button><hr>
						<button aria-label="导出"><svg><use href="#exp"/></svg></button>
						<button aria-label="报告"><svg><use href="#rep"/></svg></button>
						<button aria-label="图表"><svg><use href="#cht"/></svg></button><hr>
						<button aria-label="帮助"><svg><use href="#help"/></svg></button>
					</div>
					<ul class="tree">
						<li><div class="node"><svg><use href="#rule"/></svg><span class="sel cn">新建调度程序研究 - 1</span></div></li>
					</ul>
				</div>
				<div class="right">
					<div class="tabs"><button class="on wide">方案</button><button>要优化的泵站</button><button>要优化的水泵</button><button class="cut">约束</button><div class="spin"><button aria-label="左">◂</button><button aria-label="右">▸</button></div></div>
					<div class="page">
						<fieldset>
							<legend>要优化的方案</legend>
							<label for="scn">方案:</label>
							<span class="combo"><select id="scn"><option>Calibrated</option></select></span>
						</fieldset>
					</div>
				</div>
			</div>
		</section>
	</body>
</html>
```
FILE: styles.css
```
*{
	box-sizing: border-box;
}
body{
	margin: 0;
	height: 100vh;
	overflow: hidden;
	position: relative;
	font: 12px/16px "Noto Sans", "Noto Sans CJK SC", sans-serif;
	color: #1a1a1a;
	background: #f0f0f0;
}
ul{
	padding: 0;
	margin: 0;
	list-style: none;
}
h1, h2{
	margin: 0;
	font-size: 12px;
	font-weight: normal;
}
button{
	padding: 0;
	border: 0;
	background: none;
	font: inherit;
	color: inherit;
	white-space: nowrap;
}
select, input{
	font: inherit;
	color: inherit;
}
svg{
	flex: none;
	width: 16px;
	height: 16px;
	display: block;
}
hr{
	margin: 0 3px 0 2px;
	border: 0;
	width: 1px;
	flex: none;
	background: #c0c0c0;
}
.sprite{
	display: none;
}
.caret{
	flex: none;
	display: inline-block;
	border: 4px solid transparent;
	border-top-color: #111;
	border-bottom: 0;
}
.app{
	height: 100%;
	display: flex;
	flex-direction: column;
}

/*菜单*/
.menu{
	flex: none;
	height: 28px;
	padding: 3px 3px 0 1px;
	display: flex;
	align-items: flex-start;
	background: #f4f4f4;
	border-bottom: 1px solid #bebebe;
}
.menu > button{
	height: 24px;
	padding: 0 13px;
}
.menu .file{
	padding: 0 11px;
	color: #fff;
	background: #0a6fc8;
}
.menu .on{
	height: 25px;
	margin: 0 1px;
	padding: 0 11px;
	border: 1px solid #bebebe;
	border-bottom: 0;
	background: #f5f5f5;
}
.menu .find{
	margin: 2px 8px 0 auto;
	width: 200px;
	height: 22px;
	display: flex;
	align-items: center;
	border: 1px solid #bebebe;
}
.find input{
	flex: 1;
	min-width: 0;
	padding: 0 9px;
	border: 0;
	font-size: 11px;
	background: none;
}
.find svg{
	width: 13px;
	height: 13px;
	margin-right: 4px;
}
.find .drop{
	width: 16px;
	height: 20px;
	border-left: 1px solid #bebebe;
}
.drop .caret{
	border-width: 3px;
	border-top-width: 4px;
	border-bottom: 0;
	vertical-align: middle;
}
.menu > .mini{
	padding: 0 4px;
}
.mini svg{
	width: 14px;
	height: 14px;
}

/*功能区*/
.ribbon{
	flex: none;
	height: 95px;
	display: flex;
	background: #f5f5f5;
	border-bottom: 1px solid #bebebe;
	border-left: 2px solid #c8c8c8;
}
.group{
	margin: 1px 0;
	display: flex;
	flex-direction: column;
	justify-content: space-between;
	border-right: 1px solid #c0c0c0;
}
.g1{
	width: 337px;
}
.g2{
	width: 472px;
}
.g3{
	width: 329px;
}
.g4{
	width: 96px;
}
.group h2{
	text-align: center;
	line-height: 18px;
}
.tools{
	flex: 1;
	padding: 6px 7px 0 7px;
	display: flex;
	justify-content: space-between;
}
.tools hr{
	margin: 0 2px;
	height: 58px;
}
.big{
	height: 66px;
	padding: 0;
	display: flex;
	flex-direction: column;
	align-items: center;
	line-height: 14px;
}
.big svg{
	width: 32px;
	height: 32px;
	margin: 2px 0 3px;
}
.big > .caret{
	margin-top: 2px;
}
.big span .caret{
	margin: 0 0 3px 3px;
}
.col{
	display: flex;
	flex-direction: column;
}
.col button{
	height: 22px;
	display: flex;
	align-items: center;
	gap: 4px;
	line-height: 14px;
	margin-top: -1px;
	margin-bottom: 1px;
}
.col.mid{
	padding-top: 10px;
}

/*工作区*/
.work{
	flex: 1;
	min-height: 0;
	display: flex;
	gap: 4px;
	background: #f0f0f0;
	border-left: 1px solid #c0c0c0;
	border-right: 2px solid #b8b8b8;
}
.side{
	flex: none;
	width: 311px;
	display: flex;
	flex-direction: column;
	border-right: 1px solid #828790;
}
.dock{
	flex: none;
	height: 25px;
	padding: 0 5px 0 9px;
	display: flex;
	align-items: center;
	justify-content: space-between;
	background: linear-gradient(#fdfdfd, #ebebeb);
}
.side .dock{
	height: 28px;
	padding-bottom: 3px;
}
.side .dock.low{
	padding: 2px 0 0 9px;
}
.dock::before{
	content: "";
	width: 2px;
	height: 14px;
	margin-right: 3px;
	border-left: 2px dotted #999;
}
.side .dock::before{
	margin-left: -6px;
}
.notify .dock::before{
	margin-left: -7px;
}
.dock b{
	flex: 1;
	color: #000;
	font-size: 13px;
}
.dock span{
	display: flex;
	gap: 8px;
}
.dock span svg{
	width: 12px;
	height: 12px;
}
.pick{
	padding: 0 24px 4px 3px;
}
.pick select{
	width: 100%;
	height: 20px;
}
.pick select, .combo select{
	appearance: none;
	padding: 0 3px;
	border: 1px solid #707070;
	border-radius: 3px;
	background: linear-gradient(#f4f4f4 45%, #dcdcdc 50%, #cfcfcf);
	font: 10px "Liberation Mono", monospace;
	color: #000;
}
.bar{
	flex: none;
	height: 26px;
	display: flex;
	align-items: center;
	background: linear-gradient(#fdfdfd, #ededed);
}
.bar button{
	width: 23px;
	height: 22px;
	display: flex;
	align-items: center;
	justify-content: center;
}
.bar .dd{
	width: 28px;
	padding-right: 3px;
	gap: 1px;
}
.bar .off{
	width: 31px;
	gap: 3px;
}
.bar .off .caret{
	border-top-color: #999;
}
.bar .caret{
	border-width: 3px;
	border-bottom: 0;
}
.bar .txt{
	width: 48px;
	margin: 0 5px 0 0;
	gap: 3px;
}
.bar hr{
	height: 16px;
}
.flat{
	background: none;
}
.side .bar + .tree{
	border-top: 1px solid #828790;
}
.tree{
	min-height: 0;
	overflow: hidden;
	background: #fff;
}
.symbols{
	flex: none;
	height: 455px;
	padding: 1px 0 0 8px;
	border-bottom: 1px solid #828790;
}
.layers{
	flex: 1;
	padding: 1px 0 0 8px;
	border-bottom: 1px solid #828790;
}
.tree li{
	position: relative;
}
.tree ul{
	margin-left: 19px;
}
.node{
	height: 16px;
	padding-left: 15px;
	display: flex;
	align-items: center;
	font: 10px/15px "Liberation Mono", monospace;
	color: #000;
	white-space: nowrap;
}
/*虚线连接*/
.tree li::before{
	content: "";
	position: absolute;
	left: 4px;
	top: 0;
	bottom: 0;
	border-left: 1px dotted #888;
}
.tree li:last-child::before{
	bottom: auto;
	height: 8px;
}
.left > .tree > li::before, .layers > li::before{
	display: none;
}
.node::before{
	content: "";
	width: 11px;
	margin-left: -11px;
	border-top: 1px dotted #888;
}
.node svg{
	position: relative;
}
.node span{
	margin-left: 3px;
	padding: 0 2px;
}
.node .sel{
	background: #f0f0f0;
}
.node .cn{
	font: 12px/16px "Liberation Sans", "Noto Sans CJK SC", sans-serif;
}
.box{
	position: absolute;
	left: 0;
	width: 9px;
	height: 9px;
	border: 1px solid #919191;
	border-radius: 1px;
	background: linear-gradient(#2f4f9c, #2f4f9c) center / 5px 1px no-repeat, #f6f6f6;
}
.plus{
	background: linear-gradient(#2f4f9c, #2f4f9c) center / 5px 1px no-repeat, linear-gradient(#2f4f9c, #2f4f9c) center / 1px 5px no-repeat, #f6f6f6;
}
.node input{
	appearance: none;
	flex: none;
	width: 13px;
	height: 13px;
	margin: 0;
	border: 1px solid #8e8f8f;
	background: #fff;
	box-shadow: inset 0 0 0 1px #fff, inset 0 0 0 8px #dfe3e8;
}
.node input:checked::before{
	content: "";
	display: block;
	width: 4px;
	height: 8px;
	margin: 0 auto;
	border: solid #3a5694;
	border-width: 0 2px 2px 0;
	transform: rotate(35deg);
}

/*绘图区*/
.center{
	flex: 1;
	min-width: 0;
	display: flex;
	flex-direction: column;
	gap: 4px;
	padding-right: 1px;
}
.drawing{
	flex: 1;
	min-height: 0;
	padding: 0 3px 3px;
	display: flex;
	flex-direction: column;
	border: 1px solid #999;
}
.doc{
	flex: none;
	height: 29px;
	display: flex;
	align-items: center;
	justify-content: space-between;
	padding: 0 0 0 30px;
	background: linear-gradient(#efefef, #fdfdfd);
}
.doc b{
	align-self: flex-end;
}
.doc span{
	display: flex;
	gap: 4px;
}
.doc svg{
	width: 10px;
	height: 10px;
}
.canvas{
	flex: 1;
	min-height: 0;
	position: relative;
	overflow: hidden;
	background: #fff;
}
.extent{
	position: absolute;
	left: 262px;
	right: 268px;
	top: 348px;
	bottom: 3px;
	border: 1px dashed #111;
}
.net{
	position: absolute;
	left: 586px;
	bottom: 16px;
	width: 140px;
	height: 300px;
}

/*选项卡*/
.tabs{
	flex: none;
	height: 22px;
	display: flex;
	align-items: flex-end;
	position: relative;
	overflow: hidden;
	box-shadow: inset 0 -1px 0 #82879a;
	font-family: "Liberation Sans", "Noto Sans CJK SC", sans-serif;
	color: #000;
}
.tabs > button{
	height: 19px;
	padding: 1px 5px 0 4px;
	margin-right: 1px;
	border: 1px solid #82879a;
	background: linear-gradient(#f4f4f4 45%, #e2e2e2 50%, #d4d4d4);
}
.tabs > .on{
	height: 22px;
	margin-right: 0;
	padding: 0 6px 2px;
	border-color: #a0a4b4;
	border-bottom: 0;
	background: #fff;
}
.tabs > .wide{
	padding-right: 19px;
}
.tabs > .cut{
	flex: 1 1 0;
	min-width: 0;
	overflow: hidden;
	text-align: left;
	padding: 1px 0 0 2px;
	margin: 0;
	border-right: 0;
}
.spin{
	flex: none;
	align-self: flex-start;
	display: flex;
	padding: 3px 0 0;
}
.spin button{
	width: 15px;
	height: 15px;
	font-size: 10px;
	line-height: 12px;
	color: #4a5f96;
	border: 1px solid #c4c6cf;
	background: #f3f3f5;
}
.notify{
	flex: none;
	height: 201px;
	display: flex;
	flex-direction: column;
}
.notify .page{
	flex: 1;
	min-height: 0;
	padding: 4px 4px 6px 6px;
	display: flex;
	flex-direction: column;
	border: 1px solid #828790;
	border-top: 0;
}
.notify .page .bar{
	height: 25px;
}
.notify .bar button:first-child{
	width: 21px;
}

/*列表*/
.list{
	overflow: hidden;
	padding: 2px 1px 0 5px;
	background: #fff;
	border: 1px solid #828790;
	font-family: "Liberation Sans", "Noto Sans CJK SC", sans-serif;
	color: #000;
}
.notify .page .list{
	flex: 1;
	padding-left: 0;
}
table{
	width: 100%;
	border-collapse: separate;
	border-spacing: 0;
	table-layout: fixed;
}
.list thead th{
	height: 22px;
	padding: 0 2px 0 6px;
	text-align: left;
	font-weight: normal;
	background: linear-gradient(#fff 45%, #f5f6f8 50%, #f2f3f5);
	border-right: 1px solid #dcdee1;
	border-bottom: 1px solid #d0d0d0;
}
.list thead .num{
	text-align: right;
	padding-right: 6px;
}
.list thead th:last-child{
	border-right: 0;
}
.right .list thead th:first-child{
	padding-left: 2px;
}
.list tbody td{
	height: 16px;
	padding: 0 2px;
	font: 10px/15px "Liberation Mono", monospace;
}
.list .cn td{
	height: 17px;
	font: 12px/16px "Liberation Sans", "Noto Sans CJK SC", sans-serif;
	background: #f0f0f0;
	border-top: 1px solid #fff;
}
.lab{
	width: 176px;
}
.c72{
	width: 72px;
}
.c90{
	width: 90px;
}
.c120{
	width: 118px;
}
.c135{
	width: 135px;
}
.c136{
	width: 136px;
}

/*状态栏*/
.status{
	flex: none;
	height: 23px;
	padding-top: 1px;
	display: flex;
	justify-content: flex-end;
	border-top: 1px solid #828790;
	background: #e1e1e1;
}
.status > *{
	display: flex;
	align-items: center;
	justify-content: center;
	border-left: 1px solid #a0a0a0;
	box-shadow: inset 1px 0 0 #f8f8f8;
	color: #111;
}
.xy{
	width: 219px;
}
.lvl{
	width: 109px;
}
.ico{
	width: 30px;
}
.ico svg{
	width: 15px;
	height: 15px;
}
.gap{
	width: 14px;
}
.status button{
	width: 53px;
	padding: 0 15px 0 0;
	background: #f0eeed;
}

/*窗口*/
.window{
	position: absolute;
	display: flex;
	flex-direction: column;
	padding: 0 6px 6px;
	border: 1px solid #4f4f48;
	border-radius: 7px;
	background: rgba(255, 252, 226, 0.78);
	backdrop-filter: blur(3px);
	box-shadow: inset 0 0 0 1px rgba(255, 255, 255, 0.7), 0 2px 8px 1px rgba(0, 0, 0, 0.5);
}
.active{
	border-color: #1e1e1a;
	background: linear-gradient(110deg, #d8d2bd, #c9bea3 25%, #b6aa8c 40%, #cdc4ab 60%, #bdb293);
	box-shadow: inset 0 0 0 1px rgba(255, 255, 255, 0.6), 0 2px 12px 3px rgba(0, 0, 0, 0.7);
}
.w1{
	left: 46px;
	top: 131px;
	width: 910px;
	height: 599px;
}
.w2{
	left: 949px;
	top: 128px;
	width: 625px;
	height: 346px;
}
.w3{
	left: 950px;
	top: 474px;
	width: 622px;
	height: 369px;
}
.title{
	flex: none;
	height: 28px;
	display: flex;
	align-items: flex-start;
	padding-left: 2px;
}
.w1 .title{
	margin-right: -4px;
}
.title > svg{
	margin: 7px 4px 0 0;
}
.title h1{
	flex: 1;
	line-height: 28px;
	color: #000;
}
.ctl{
	display: flex;
	height: 19px;
	border: 1px solid #8a8878;
	border-top: 0;
	border-radius: 0 0 5px 5px;
	overflow: hidden;
}
.one{
	margin-right: 13px;
}
.ctl button{
	width: 27px;
	display: flex;
	align-items: center;
	justify-content: center;
	border-left: 1px solid #a5a292;
}
.ctl button:first-child{
	width: 28px;
	border-left: 0;
}
.ctl .x{
	width: 47px;
}
.ctl svg{
	width: 14px;
	height: 12px;
}
.ctl .wide{
	width: 18px;
	height: 10px;
}
.active .ctl{
	border-color: #55523f;
	background: linear-gradient(#e2ddcc 45%, #b1a98e 50%, #cfc7ad);
}
.active .ctl .x{
	background: linear-gradient(#e3a195 45%, #c0392a 50%, #d9654a);
}
.body{
	flex: 1;
	min-height: 0;
	display: flex;
	gap: 4px;
	border: 1px solid #77796f;
	background: #f0f0f0;
}
.w2 .body, .w3 .body{
	gap: 3px;
}
.left{
	flex: none;
	width: 381px;
	display: flex;
	flex-direction: column;
	border-right: 1px solid #828790;
}
.w2 .left, .w3 .left{
	width: 329px;
}
.left .bar{
	height: 25px;
}
.left .tree{
	flex: 1;
	padding: 1px 0 0 8px;
	border: 1px solid #828790;
	border-width: 1px 0 1px 1px;
}
.right{
	flex: 1;
	min-width: 0;
	display: flex;
	flex-direction: column;
}
.right > .page{
	flex: 1;
	min-height: 0;
	display: flex;
	flex-direction: column;
	border: 1px solid #828790;
	border-top: 0;
	box-shadow: inset 0 0 0 2px #fff;
}
.w1 .page{
	padding: 2px 5px 4px 2px;
}
.w1 .page > .bar{
	height: 30px;
	padding: 0 0 3px 2px;
}
.page > .flat button, .lower > .flat button{
	width: 28px;
}
.w1 .page > .bar hr{
	height: 26px;
	background: #999;
}
.w1 .flat .dd{
	width: 54px;
	gap: 11px;
}
.w1 .flat .caret{
	border-width: 4px;
	border-bottom: 0;
}
.w1 .flat label{
	margin-left: auto;
	margin-right: 62px;
	color: #000;
}
.combo{
	position: relative;
	width: 108px;
	height: 20px;
}
.combo select{
	width: 100%;
	height: 20px;
}
.combo::after{
	content: "";
	position: absolute;
	right: 5px;
	top: 8px;
	border: 4px solid transparent;
	border-top-color: #000;
	border-bottom: 0;
}
.upper{
	flex: none;
	height: 219px;
	margin-bottom: 5px;
	padding: 5px 0 0;
	display: flex;
	gap: 7px;
}
.upper .list{
	flex: none;
	width: 258px;
	height: 218px;
}
.upper .grid{
	flex: 1;
	height: 213px;
}
.lower{
	flex: 1;
	min-height: 0;
	padding: 1px 3px 3px;
	display: flex;
	flex-direction: column;
	border: 1px solid #828790;
	border-top: 0;
	background: #fff;
}
.lower .bar{
	height: 29px;
	padding-left: 1px;
	background: #f0f0f0;
}
.lower .bar hr{
	height: 26px;
	background: #999;
	margin: 0 4px;
}

/*数据表*/
.grid{
	min-height: 0;
	display: grid;
	grid-template-columns: 1fr 17px;
	grid-template-rows: 1fr 16px;
	background: #f0f0f0;
	border: 1px solid #d8d8d8;
	border-width: 2px 1px 1px 2px;
	border-top-color: #6f6f6f;
	border-left-color: #6f6f6f;
}
.lower .grid{
	flex: 1;
}
.cells{
	min-height: 0;
	overflow: hidden;
}
.cells th:first-child{
	width: 41px;
	text-align: left;
}
.cells th{
	padding: 0 2px;
	font: 12px/16px "Roboto", "Noto Sans CJK SC", sans-serif;
	color: #111;
	border-right: 1px solid #a0a0a0;
	border-bottom: 1px solid #a0a0a0;
}
.cells thead th{
	height: 18px;
}
.tall thead th{
	height: 31px;
}
.cells tbody th{
	font-size: 11px;
}
.cells td{
	height: 18px;
	padding: 0 2px;
	font: 11px/16px "Roboto", sans-serif;
	background: #ffffc0;
	border-bottom: 1px solid #a0a0a0;
}
.cells tbody tr:first-child td{
	outline: 1px dashed #555;
	outline-offset: -1px;
}
.sb{
	display: flex;
	align-items: center;
	background: #f0f0f0;
}
.sb.v{
	flex-direction: column;
	padding: 6px 0;
}
.sb.h{
	padding: 0 6px;
}
.arr{
	border: 4px solid transparent;
}
.up{
	border-bottom-color: #444;
	border-top: 0;
}
.down{
	border-top-color: #444;
	border-bottom: 0;
	margin-top: auto;
}
.lt{
	border-right-color: #444;
	border-left: 0;
}
.rt{
	border-left-color: #444;
	border-right: 0;
	margin-left: auto;
}
.thumb{
	display: flex;
	align-items: center;
	justify-content: center;
	border: 1px solid #979797;
	border-radius: 2px;
	background: linear-gradient(90deg, #f4f4f4, #e0e0e0 50%, #cfcfcf);
}
.sb b{
	font: 10px/10px "DejaVu Sans", sans-serif;
	color: #555;
}
.v .thumb{
	width: 14px;
	height: 38px;
	margin-top: 8px;
}
.tall .v .thumb{
	height: 139px;
}
.h .thumb{
	width: 129px;
	height: 14px;
	margin-left: 8px;
	background: linear-gradient(#f4f4f4, #e0e0e0 50%, #cfcfcf);
}
.tall .h .thumb{
	width: 15px;
}

/*右侧窗口*/
.w3 .page{
	padding: 3px 12px 3px 3px;
}
.w3 .page .bar{
	height: 35px;
	padding-bottom: 11px;
}
.w3 .page .list{
	flex: 1;
}
.w2 .page{
	padding: 3px 7px;
}
fieldset{
	margin: 0;
	padding: 20px 0 32px;
	min-width: 0;
	display: flex;
	align-items: center;
	justify-content: flex-end;
	border: 1px solid #d5dfe5;
	border-radius: 4px;
	overflow: hidden;
	color: #000;
}
legend{
	margin-left: 4px;
	padding: 0 2px;
}
fieldset label{
	margin-right: 7px;
}
fieldset .combo{
	flex: none;
	width: 108px;
	margin-right: -47px;
}
```
